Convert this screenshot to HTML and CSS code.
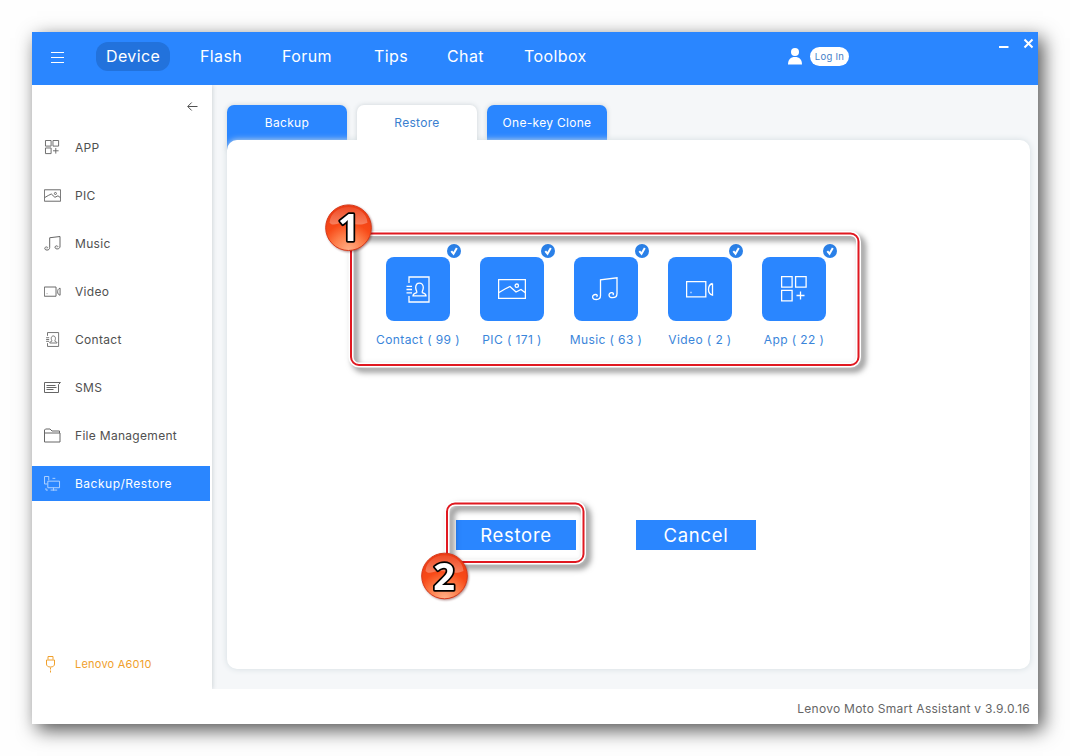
FILE: index.html
```html
<!DOCTYPE html>
<html lang="en">
<head>
<meta charset="utf-8">
<title>Lenovo Moto Smart Assistant</title>
<link rel="stylesheet" href="styles.css">
</head>
<body>
<svg class="defs" width="0" height="0">
  <symbol id="i-app" viewBox="0 0 26 26"><path d="M.6.6h10.500v10.500H.6zM14.600.6h10.500v10.500H14.600zM.6 14.400h10.500v10.500H.6zM19.500 15.500v8M15.500 19.500h8"/></symbol>
  <symbol id="i-app-small" viewBox="0 0 16 16"><path d="M.5.5h6v6h-6zM8.500.5h6v6h-6zM.5 8.500h6v6h-6zM11.500 8.500v6M8.500 11.500h6"/></symbol>
  <symbol id="i-pic" viewBox="0 0 28 20"><path d="M.6.6h26.800v18.800H.6zM1 13.500l6-3.500 5-2.500 6 5.500 5-2.500 4 3"/><circle cx="18.800" cy="6.700" r="1.700"/></symbol>
  <symbol id="i-music" viewBox="0 0 26 24"><path d="M8.500 18.500V2.800L25 .8v16M8.500 18.500c0 2.500-1.700 4-4.200 4-5 0-4.500-5-.8-5 1.800 0 2.300 1.500 1 2.300M25 16.500c0 2.500-1.700 4.200-4.500 4.200-4.500 0-4.500-5-.8-5 1.800 0 2.300 1.500 1 2.300"/></symbol>
  <symbol id="i-video" viewBox="0 0 28 18"><path d="M.6 1.600h19.200v15.200H.6zM26.500 3.500v11.600c-3-.8-4-2.500-4-5.600s1-5.200 4-6M4.500 12.500h1"/></symbol>
  <symbol id="i-contact" viewBox="0 0 24 27"><path d="M3 7V1h20v25H3v-6M.5 10.300h5.500M.5 13.500h5.500M.5 16.800h5.500M7 19.800c0-2 1.500-2.300 3.700-3.200.8-.7-.8-2-1-5 0-6 7.600-6 7.600 0 0 3-1.700 4.300-1 5 2.200.9 3.700 1.200 3.700 3.200z"/></symbol>
  <symbol id="i-sms" viewBox="0 0 17 13"><path d="M.5 1.500h16l-2 2v8H.5zM2.500 4.500h9M2.500 6.500h10M2.500 8.500h7"/></symbol>
  <symbol id="i-file" viewBox="0 0 17 14"><path d="M.5 13.500v-12l1-1H6l2 2h7.500v2M.5 4.500h15.500v9H.5z"/></symbol>
  <symbol id="i-backup" viewBox="0 0 18 16"><path d="M3.500 8.500h-3v-8H5v4M4 5.500h12.500v7H4zM9 2.500h3M10 15.500v-3M7 15h7M2 13v2h2"/></symbol>
  <symbol id="i-check" viewBox="0 0 14 14"><path d="M4.300 7.200 6.500 9.700 9.800 4"/></symbol>
</svg>
<div class="window">
  <header class="topbar">
    <svg class="burger" viewBox="0 0 13 12"><path d="M0 .5h13M0 5.500h13M0 10.500h13"/></svg>
    <nav class="nav">
      <a class="nav-item current">Device</a>
      <a class="nav-item flash">Flash</a>
      <a class="nav-item forum">Forum</a>
      <a class="nav-item tips">Tips</a>
      <a class="nav-item chat">Chat</a>
      <a class="nav-item toolbox">Toolbox</a>
    </nav>
    <div class="account">
      <svg class="user" viewBox="0 0 14 17"><circle cx="7" cy="4" r="4"/><path d="M0 16.500c0-5 2.500-7.500 7-7.500s7 2.500 7 7.500z"/></svg>
      <span class="login">Log In</span>
    </div>
    <div class="controls">
      <svg class="ctl" viewBox="0 0 35 12"><path d="M0 9h9.500"/><path d="M25.500 1.500l8 8M33.500 1.500l-8 8"/></svg>
    </div>
  </header>
  <div class="body">
    <aside class="sidebar">
      <div class="collapse"><svg viewBox="0 0 11 9"><path d="M10.500 4.500H1M4.700.5l-4 4 4 4"/></svg></div>
      <ul class="menu">
        <li><svg class="ic own"><use href="#i-app-small"/></svg><span>APP</span></li>
        <li><svg class="ic"><use href="#i-pic"/></svg><span>PIC</span></li>
        <li><svg class="ic"><use href="#i-music"/></svg><span>Music</span></li>
        <li><svg class="ic"><use href="#i-video"/></svg><span>Video</span></li>
        <li><svg class="ic"><use href="#i-contact"/></svg><span>Contact</span></li>
        <li><svg class="ic own"><use href="#i-sms"/></svg><span>SMS</span></li>
        <li><svg class="ic own"><use href="#i-file"/></svg><span>File Management</span></li>
        <li class="selected"><svg class="ic own"><use href="#i-backup"/></svg><span>Backup/Restore</span></li>
      </ul>
      <div class="device">
        <svg viewBox="0 0 9 17"><path d="M2 3.500v-3h5v3M.5 4h8v4c0 2-1.500 3-4 3s-4-1-4-3z"/><path d="M4.500 11.500v5.500" stroke-dasharray="2 1"/></svg>
        <span>Lenovo A6010</span>
      </div>
    </aside>
    <main class="content">
      <div class="tabs">
        <div class="tab first">Backup</div>
        <div class="tab on">Restore</div>
        <div class="tab">One-key Clone</div>
      </div>
      <section class="panel">
        <div class="cards">
          <div class="card"><div class="tile"><svg width="24" height="27"><use href="#i-contact"/></svg></div><svg class="check"><use href="#i-check"/></svg><span>Contact ( 99 )</span></div>
          <div class="card"><div class="tile"><svg width="28" height="20"><use href="#i-pic"/></svg></div><svg class="check"><use href="#i-check"/></svg><span>PIC ( 171 )</span></div>
          <div class="card"><div class="tile music"><svg width="26" height="24"><use href="#i-music"/></svg></div><svg class="check"><use href="#i-check"/></svg><span>Music ( 63 )</span></div>
          <div class="card"><div class="tile"><svg width="28" height="18"><use href="#i-video"/></svg></div><svg class="check"><use href="#i-check"/></svg><span>Video ( 2 )</span></div>
          <div class="card"><div class="tile"><svg width="26" height="26"><use href="#i-app"/></svg></div><svg class="check"><use href="#i-check"/></svg><span>App ( 22 )</span></div>
        </div>
        <div class="actions">
          <button>Restore</button>
          <button>Cancel</button>
        </div>
      </section>
    </main>
  </div>
  <footer class="footer"><span>Lenovo Moto Smart Assistant v 3.9.0.16</span></footer>
</div>
<svg class="marks" width="1070" height="756" viewBox="0 0 1070 756">
  <defs>
    <radialGradient id="ball" cx=".5" cy="1" r="1">
      <stop offset="0" stop-color="#ffb088"/><stop offset=".35" stop-color="#fd7c48"/><stop offset=".6" stop-color="#f84a18"/><stop offset="1" stop-color="#ea3a14"/>
    </radialGradient>
    <linearGradient id="gloss" x1="0" y1="0" x2="0" y2="1">
      <stop offset="0" stop-color="#fff" stop-opacity=".08"/><stop offset="1" stop-color="#fff" stop-opacity=".3"/>
    </linearGradient>
  </defs>
  <g class="frame">
    <rect class="halo" x="351" y="233.500" width="507.500" height="131.500" rx="8"/>
    <rect class="line" x="351" y="233.500" width="507.500" height="131.500" rx="8"/>
  </g>
  <g class="frame">
    <rect class="halo" x="447" y="503.500" width="136.500" height="58.500" rx="8"/>
    <rect class="line" x="447" y="503.500" width="136.500" height="58.500" rx="8"/>
  </g>
  <g class="ball" transform="translate(348.500 227.700)">
    <circle r="22.800" fill="url(#ball)"/>
    <path d="M-19-5C-17-26 17-26 19-5 10-1 2-5-5-5S-15-1-19-5z" fill="url(#gloss)"/>
    <text x="0" y="13.500">1</text>
  </g>
  <g class="ball" transform="translate(444.500 576)">
    <circle r="22.800" fill="url(#ball)"/>
    <path d="M-19-5C-17-26 17-26 19-5 10-1 2-5-5-5S-15-1-19-5z" fill="url(#gloss)"/>
    <text x="-.5" y="13.500">2</text>
  </g>
</svg>
</body>
</html>
```
FILE: styles.css
```css
* { box-sizing: border-box; }
body {
  margin: 0;
  padding: 32px;
  width: 1070px;
  height: 756px;
  overflow: hidden;
  background: #fefefe;
  font-family: Inter, "Open Sans", sans-serif;
  font-size: 12px;
  letter-spacing: .3px;
  color: #505050;
}
svg { display: block; overflow: visible; fill: none; stroke: currentColor; }
.defs { position: absolute; }
.window {
  width: 1006px;
  height: 692px;
  display: flex;
  flex-direction: column;
  background: #fff;
  box-shadow: 5px 6px 18px rgba(0, 0, 0, .68);
}
.topbar {
  height: 53px;
  flex: none;
  display: flex;
  align-items: flex-start;
  background: #2a86ff;
  color: #fff;
}
.burger { width: 13px; height: 12px; margin: 20px 0 0 19px; }
.nav { display: flex; width: 540px; margin: 10px 0 0 32px; font-size: 16px; letter-spacing: .4px; line-height: 29px; }
.nav-item { flex: none; }
.current { width: 74px; height: 29px; padding-left: 10px; border-radius: 12px; background: #2272dc; }
.flash { width: 82px; margin-left: 30px; }
.forum { width: 92px; }
.tips { width: 73px; }
.chat { width: 77px; }
.account { display: flex; width: 61px; margin: 15px 0 0 152px; gap: 8px; }
.user { width: 14px; height: 17px; margin-top: 1px; fill: #fff; stroke: none; }
.login { width: 39px; height: 19px; border-radius: 9.5px; background: #fff; color: #4580c8; font-size: 9.5px; line-height: 20px; text-align: center; }
.controls { margin: 6px 0 0 150px; }
.ctl { width: 35px; height: 12px; stroke-width: 2; }
.body { height: 604px; flex: none; display: flex; background: #f5f7f9; }
.sidebar { width: 180px; display: flex; flex-direction: column; background: #fff; box-shadow: 1px 0 4px rgba(70, 90, 100, .2); clip-path: inset(0 -8px 0 0); }
.collapse { height: 45px; padding: 17px 0 0 155px; }
.collapse svg { width: 11px; height: 9px; }
.menu { list-style: none; margin: 0; padding: 0; display: flex; flex-direction: column; gap: 13px; }
.menu li { height: 35px; width: 178px; padding-left: 12px; display: flex; align-items: center; gap: 14px; }
.ic { width: 17px; height: 15px; color: #666; stroke-width: 1.600; }
.ic.own { stroke-width: 1; height: 15px; }
.menu .selected { background: #2a86ff; color: #fff; }
.menu .selected span { letter-spacing: .5px; }
.selected .ic { color: #b8d6ff; }
.device { margin-top: 155px; padding-left: 14px; display: flex; align-items: center; gap: 20px; color: #f0a02c; font-size: 11px; letter-spacing: .22px; }
.device svg { width: 9px; height: 17px; }
.device span { margin-top: -1px; }
.content { flex: 1; padding: 20px 8px 20px 15px; }
.tabs { display: flex; gap: 10px; height: 35px; }
.tab { width: 120px; height: 35px; border-radius: 7px 7px 0 0; background: #2a86ff; color: #fff; line-height: 36px; text-align: center; box-shadow: 0 0 5px rgba(70, 90, 100, .22); }
.tab.first { height: 46px; }
.tab.on { position: relative; z-index: 1; background: #fff; color: #3a80cf; clip-path: inset(-6px -6px 0 -6px); }
.panel { position: relative; height: 529px; border-radius: 10px; background: #fff; box-shadow: 0 0 6px #d3dce0; display: flex; flex-direction: column; align-items: center; }
.cards { display: flex; width: 470px; margin: 117px 45px 0 0; }
.card { position: relative; width: 94px; display: flex; flex-direction: column; align-items: center; color: #3a85da; white-space: nowrap; }
.card span { margin-top: 11px; line-height: 16px; letter-spacing: .4px; }
.tile { width: 64px; height: 64px; border-radius: 8px; background: #2a86ff; color: #fff; display: flex; align-items: center; justify-content: center; stroke-width: 1.300; }
.tile svg { margin-left: -1px; }
.tile.music svg { margin-left: -3px; }
.check { position: absolute; left: 75.5px; top: -13.5px; width: 14px; height: 14px; border-radius: 50%; background: #2a80e8; color: #fff; stroke-width: 2; }
.actions { display: flex; gap: 60px; margin: 172px 45px 0 0; }
button { width: 120px; height: 30px; padding: 1px 0 0; border: 0; background: #2a86ff; color: #fff; font: 18.5px/29px Inter, "Open Sans", sans-serif; letter-spacing: .7px; }
.footer { height: 35px; padding: 10px 8px 0 0; text-align: right; line-height: 20px; letter-spacing: .27px; color: #666; }
.marks { position: absolute; left: 0; top: 0; pointer-events: none; }
.frame { filter: drop-shadow(4px 4px 3px rgba(0, 0, 0, .55)); }
.halo { stroke: #fff; stroke-width: 5; }
.line { stroke: #e01820; stroke-width: 2; }
.ball { stroke: none; filter: drop-shadow(1px 1px 1px rgba(80, 0, 0, .45)); }
.ball circle { stroke: #d83818; stroke-width: 1; }
.ball text { font: bold 38px "Noto Sans", sans-serif; letter-spacing: 0; text-anchor: middle; fill: #fff; stroke: #000; stroke-width: 3.500; paint-order: stroke; stroke-linejoin: round; }
```
